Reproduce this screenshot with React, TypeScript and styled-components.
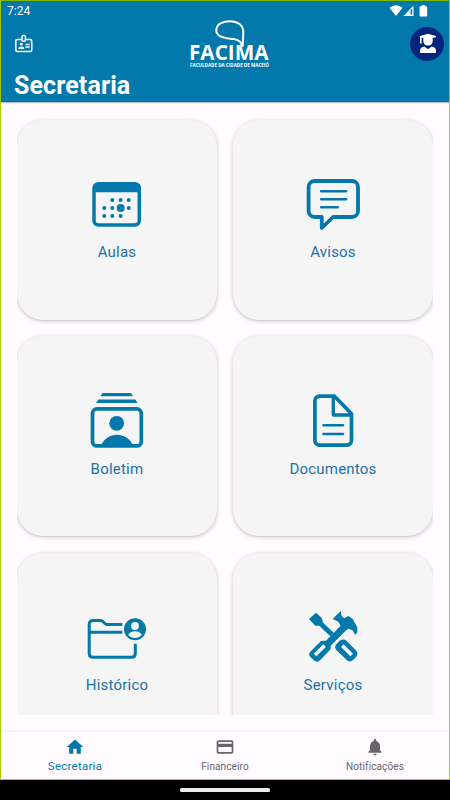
import React from "react";
import styled, { createGlobalStyle } from "styled-components";

const BLUE = "#0278ab";

const Global = createGlobalStyle`
  * { box-sizing: border-box; }
  body { margin: 0; background: #000; font-family: Roboto, sans-serif; }
  svg { display: block; }
`;

const Device = styled.div`
  width: 450px;
  height: 800px;
  display: flex;
  flex-direction: column;
  background: #000;
  overflow: hidden;
`;

const Screen = styled.div`
  height: 780px;
  display: flex;
  flex-direction: column;
  background: #fffbff;
  border: 1px solid #a6cf08;
  border-top-color: #7fba00;
`;

const Header = styled.header`
  height: 101px;
  flex: none;
  background: ${BLUE};
  color: #fff;
  box-shadow: 0 1px 1px rgba(0, 40, 70, 0.3);
`;

const StatusBar = styled.div`
  height: 19px;
  display: flex;
  justify-content: space-between;
  padding: 2px 21px 0 6px;
  font-size: 12px;
  line-height: 16px;
`;

const TopRow = styled.div`
  height: 48px;
  display: grid;
  grid-template-columns: 1fr 84px 1fr;
  align-items: center;
`;

const BadgeButton = styled.button`
  width: 20px;
  height: 20px;
  padding: 0;
  margin: 0 0 0 13px;
  border: 0;
  background: none;
  color: #fff;
`;

const Avatar = styled.div`
  width: 34px;
  height: 34px;
  justify-self: end;
  margin-right: 5px;
  border-radius: 50%;
  background: #03257e;
`;

const Title = styled.h1`
  margin: 3px 0 0 13px;
  font-size: 25px;
  line-height: 30px;
  font-weight: 700;
  letter-spacing: 0.1px;
`;

const Scroll = styled.main`
  height: 597px;
  flex: none;
  margin: 16px 16px 0;
  padding-top: 1.5px;
  overflow: hidden;
`;

const Grid = styled.div`
  display: grid;
  grid-template-columns: 200px 200px;
  grid-auto-rows: 200px;
  gap: 16.5px 16px;
`;

const Card = styled.button`
  display: flex;
  flex-direction: column;
  align-items: center;
  padding: 54.4px 0 0;
  border: 0;
  border-radius: 26px;
  background: #f5f5f5;
  color: ${BLUE};
  font: 400 15px/18px Roboto, sans-serif;
  letter-spacing: 0.22px;
  box-shadow: 0 1px 4px rgba(0, 0, 0, 0.22), 0 1px 1px rgba(0, 0, 0, 0.06);
`;

const CardLabel = styled.span`
  margin-top: 9.5px;
  color: #1b70a8;
`;

const NavBar = styled.nav`
  flex: 1;
  margin-top: 15px;
  border-top: 2px solid #f8f4f8;
  display: grid;
  grid-template-columns: 148px 152px 148px;
`;

const NavItem = styled.a<{ $active?: boolean }>`
  display: flex;
  flex-direction: column;
  align-items: center;
  padding-top: 5px;
  color: ${(p) => (p.$active ? BLUE : "#68656a")};
  font-size: ${(p) => (p.$active ? 11.4 : 10)}px;
  line-height: 14px;
  letter-spacing: ${(p) => (p.$active ? 0.3 : 0.12)}px;
`;

const NavLabel = styled.span<{ $active?: boolean }>`
  margin-top: ${(p) => (p.$active ? 2 : 3)}px;
`;

const GestureArea = styled.div`
  flex: 1;
  display: flex;
  justify-content: center;
  padding-top: 8px;
`;

const GestureBar = styled.div`
  width: 90px;
  height: 4px;
  border-radius: 1.5px;
  background: #ececec;
`;

const StatusIcons = () => (
  <svg width="40" height="16" viewBox="0 0 40 16" fill="#fff">
    <path d="M1.5 4.8Q8 -.2 14.5 4.8L8 13Z" />
    <path fillRule="evenodd" d="M25.5 2.4V13H15.5ZM22.5 7V11.6H24.2V5.4Z" />
    <path d="M33.8 2h3v1.2h1.8a.6.6 0 0 1 .6.6v9a.6.6 0 0 1-.6.6h-6.4a.6.6 0 0 1-.6-.6v-9a.6.6 0 0 1 .6-.6h1.6z" />
  </svg>
);

const BadgeIcon = () => (
  <svg width="20" height="20" viewBox="0 0 20 20" fill="none" stroke="currentColor">
    <path d="M7.500 5.500H3.300A1.500 1.500 0 0 0 1.800 7v9A1.500 1.500 0 0 0 3.300 17.500h12.900a1.500 1.500 0 0 0 1.500-1.500V7a1.500 1.500 0 0 0-1.500-1.500H12" strokeWidth="1.600" />
    <rect x="8" y="1.500" width="3.400" height="5.800" rx="1.300" strokeWidth="1.500" />
    <circle cx="7.300" cy="10.200" r="1.400" fill="currentColor" stroke="none" />
    <path d="M4.300 14.900c0-3.300 6-3.300 6 0z" fill="currentColor" stroke="none" />
    <path d="M11.500 10.500h4M11.500 13h4" strokeWidth="1.300" />
  </svg>
);

const LogoText = styled.text`
  font-family: "Open Sans", sans-serif;
  font-weight: 700;
  fill: #fff;
`;

const Logo = () => (
  <svg width="88" height="48" viewBox="0 0 88 48">
    <path d="M59.500 27C58.500 22.500 57 20.200 51 19C41 18.500 33.300 16.500 33.300 10.500C33.300 4 40 1.300 47 1.300C54.500 1.300 60.300 5 60.300 12C60.300 18 60 22 59.500 27Z" fill="none" stroke="#fff" strokeWidth="2" />
    <LogoText x="6" y="40" fontSize="20.500" textLength="79.500" lengthAdjust="spacingAndGlyphs">FACIMA</LogoText>
    <LogoText x="7" y="46.800" fontSize="4.400" textLength="79" lengthAdjust="spacingAndGlyphs">FACULDADE DA CIDADE DE MACEIÓ</LogoText>
  </svg>
);

const StudentIcon = () => (
  <svg width="34" height="34" viewBox="0 0 34 34" fill="#fff">
    <path d="M9.500 9.300 18 6.700l8 2.300v1.200L22.700 11v3c0 2.500-1.500 4.600-4.700 4.600s-4.700-2.100-4.700-4.600v-3l-1.700-.3v5.800H10V10.300z" />
    <path d="M10 26v-2.700c0-2.300 1.800-3.500 4.300-3.900L18 22.200l3.700-2.800c2.500.4 4.300 1.600 4.300 3.900V26z" />
  </svg>
);

const CardIcon: React.FC<{ children: React.ReactNode; viewBox?: string }> = ({ children, viewBox = "0 0 60 60" }) => (
  <svg width="60" height="60" viewBox={viewBox} fill="none" stroke="currentColor" strokeLinejoin="round">
    {children}
  </svg>
);

const calendarDots = [
  [25.3, 26], [33.600, 26], [41.700, 26],
  [17.300, 34], [25.300, 34], [41.700, 34],
  [17.300, 42], [25.300, 42], [33.600, 42],
];

const ClassesIcon = () => (
  <CardIcon>
    <rect x="7" y="9.800" width="45.300" height="41.300" rx="4.500" strokeWidth="3.500" />
    <path d="M6 19.500V13q0-4 4-4h39.500q4 0 4 4v6.500q-.5-1.300-3-1.300H9q-2.500 0-3 1.300z" fill="currentColor" stroke="none" />
    {calendarDots.map(([x, y]) => (
      <circle key={`${x}-${y}`} cx={x} cy={y} r="2" fill="currentColor" stroke="none" />
    ))}
    <circle cx="33.700" cy="34" r="4" fill="currentColor" stroke="none" />
  </CardIcon>
);

const NoticesIcon = () => (
  <CardIcon>
    <path d="M11.600 7H49a6 6 0 0 1 6 6v24a6 6 0 0 1-6 6H30L18.800 54V43h-7.200a6 6 0 0 1-6-6V13a6 6 0 0 1 6-6z" strokeWidth="3.800" />
    <path d="M18.200 17.300h25M18.200 25.300h25M18.200 33.300h16.500" strokeWidth="2.600" strokeLinecap="round" />
  </CardIcon>
);

const ReportIcon = () => (
  <CardIcon>
    <path d="M15.500 3h28.500l2 3.300H13.500zM11.500 9.500h36.800l2.200 3.500H9z" fill="currentColor" stroke="none" />
    <rect x="5.500" y="18.900" width="48.800" height="37" rx="4.500" strokeWidth="3.700" />
    <circle cx="29.700" cy="33.300" r="7.400" fill="currentColor" stroke="none" />
    <path d="M14 55.500C20 41 40 41 46 55.500z" fill="currentColor" stroke="none" />
  </CardIcon>
);

const DocumentIcon = () => (
  <CardIcon>
    <path d="M16.500 6.200H31.500L48.500 23.700V50.500a4.600 4.600 0 0 1-4.600 4.600H16.500a4.600 4.600 0 0 1-4.600-4.600V10.800a4.600 4.600 0 0 1 4.600-4.600z" strokeWidth="3.700" />
    <path d="M30.300 6.500V25H48.500" strokeWidth="3.300" />
    <path d="M20.500 35.300H40M20.500 44H40" strokeWidth="2.600" strokeLinecap="round" />
  </CardIcon>
);

const HistoryIcon = () => (
  <CardIcon>
    <path d="M35.300 17.600H21q-2 0-3.300-1.400l-1.200-1.200q-1.300-1.400-3.300-1.400H6q-3.800 0-3.800 3.800V46.400q0 3.800 3.800 3.800h38.500q3.800 0 3.800-3.800v-9.700M2.200 25.300H35.300" strokeWidth="3" />
    <circle cx="48" cy="22.300" r="11" fill="currentColor" stroke="none" />
    <circle cx="48" cy="19" r="3.900" fill="#f5f5f5" stroke="none" />
    <path d="M41.300 28c1.500-5 11.900-5 13.400 0c-3.500 4-9.900 4-13.400 0z" fill="#f5f5f5" stroke="none" />
  </CardIcon>
);

const ToolsIcon = () => (
  <CardIcon viewBox="24 21 180 180">
    <g fill="currentColor" stroke="none">
      <path d="M42 57 63 38 81 55 83 67 116 98 106 109 73 77 61 77z" />
      <path d="M113 57 137 33 140 48 148 55 160 48 173 57 187 82 187 98 180 104 173 91 160 86 151 93 107 137 107 148 75 181Q66 189 57 181L46 171Q39 163 46 155L78 123 93 122 137 77 130 65z" />
      <path d="M124 133 134 122Q146 115 155 123L184 152Q191 162 183 171L173 181Q164 188 155 180L124 150Q117 142 124 133z" />
    </g>
    <path d="M60 165 89 137M142 137 170 165" stroke="#f5f5f5" strokeWidth="11" strokeLinecap="butt" />
  </CardIcon>
);

const HomeIcon = () => (
  <svg width="20" height="20" viewBox="0 0 24 24" fill="currentColor">
    <path d="M10 20v-6h4v6h5v-8h3L12 3 2 12h3v8z" />
  </svg>
);

const PaymentIcon = () => (
  <svg width="20" height="20" viewBox="0 0 24 24" fill="currentColor">
    <path d="M20 4H4c-1.110 0-2 .89-2 2v12c0 1.110.89 2 2 2h16c1.110 0 2-.89 2-2V6c0-1.110-.89-2-2-2zm0 14H4v-6h16v6zm0-10H4V6h16v2z" />
  </svg>
);

const BellIcon = () => (
  <svg width="20" height="20" viewBox="0 0 24 24" fill="currentColor">
    <path d="M12 22c1.100 0 2-.9 2-2h-4c0 1.100.89 2 2 2zm6-6v-5c0-3.070-1.640-5.640-4.500-6.320V4c0-.83-.67-1.500-1.500-1.500s-1.500.67-1.500 1.500v.68C7.630 5.360 6 7.920 6 11v5l-2 2v1h16v-1l-2-2z" />
  </svg>
);

const cards = [
  { label: "Aulas", Icon: ClassesIcon },
  { label: "Avisos", Icon: NoticesIcon },
  { label: "Boletim", Icon: ReportIcon },
  { label: "Documentos", Icon: DocumentIcon },
  { label: "Histórico", Icon: HistoryIcon },
  { label: "Serviços", Icon: ToolsIcon },
];

const tabs = [
  { label: "Secretaria", Icon: HomeIcon, active: true },
  { label: "Financeiro", Icon: PaymentIcon, active: false },
  { label: "Notificações", Icon: BellIcon, active: false },
];

export default function App() {
  return (
    <Device>
      <Global />
      <Screen>
        <Header>
          <StatusBar>
            <span>7:24</span>
            <StatusIcons />
          </StatusBar>
          <TopRow>
            <BadgeButton aria-label="Carteirinha"><BadgeIcon /></BadgeButton>
            <Logo />
            <Avatar><StudentIcon /></Avatar>
          </TopRow>
          <Title>Secretaria</Title>
        </Header>
        <Scroll>
          <Grid>
            {cards.map(({ label, Icon }) => (
              <Card key={label}>
                <Icon />
                <CardLabel>{label}</CardLabel>
              </Card>
            ))}
          </Grid>
        </Scroll>
        <NavBar>
          {tabs.map(({ label, Icon, active }) => (
            <NavItem key={label} $active={active}>
              <Icon />
              <NavLabel $active={active}>{label}</NavLabel>
            </NavItem>
          ))}
        </NavBar>
      </Screen>
      <GestureArea>
        <GestureBar />
      </GestureArea>
    </Device>
  );
}
